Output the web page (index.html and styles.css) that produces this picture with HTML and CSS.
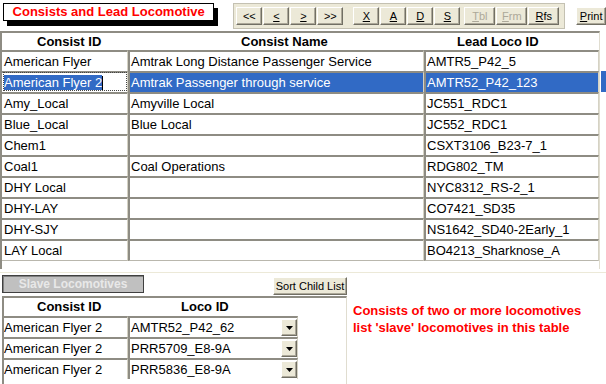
FILE: index.html
```html
<!DOCTYPE html>
<html lang="en">
<head>
  <meta charset="UTF-8">
  <title>Consists and Lead Locomotive</title>
  <link rel="stylesheet" href="styles.css">
</head>
<body>
  <!-- Title + record toolbar -->
  <div class="top-bar">
    <div class="form-title">Consists and Lead Locomotive</div>
    <div class="nav-panel">
      <button class="tb-btn">&lt;&lt;</button>
      <button class="tb-btn"><u>&lt;</u></button>
      <button class="tb-btn"><u>&gt;</u></button>
      <button class="tb-btn">&gt;&gt;</button>
      <button class="tb-btn edit-first"><u>X</u></button>
      <button class="tb-btn"><u>A</u></button>
      <button class="tb-btn"><u>D</u></button>
      <button class="tb-btn"><u>S</u></button>
      <button class="tb-btn wide tbl-gap" disabled><u>T</u>bl</button>
      <button class="tb-btn wide" disabled><u>F</u>rm</button>
      <button class="tb-btn wide"><u>R</u>fs</button>
    </div>
    <button class="tb-btn print-btn"><u>P</u>rint</button>
  </div>

  <!-- Consists grid -->
  <div class="main">
    <div class="grid">
      <div class="grid-head">
        <div class="h1">Consist ID</div>
        <div class="h2">Consist Name</div>
        <div class="h3">Lead Loco ID</div>
      </div>
      <div class="grid-row">
        <div class="cell">American Flyer</div>
        <div class="cell">Amtrak Long Distance Passenger Service</div>
        <div class="cell">AMTR5_P42_5</div>
      </div>
      <div class="grid-row selected">
        <div class="cell focus"><span class="sel-text">American Flyer 2</span><span class="caret"></span></div>
        <div class="cell">Amtrak Passenger through service</div>
        <div class="cell">AMTR52_P42_123</div>
      </div>
      <div class="grid-row">
        <div class="cell">Amy_Local</div>
        <div class="cell">Amyville Local</div>
        <div class="cell">JC551_RDC1</div>
      </div>
      <div class="grid-row">
        <div class="cell">Blue_Local</div>
        <div class="cell">Blue Local</div>
        <div class="cell">JC552_RDC1</div>
      </div>
      <div class="grid-row">
        <div class="cell">Chem1</div>
        <div class="cell"></div>
        <div class="cell">CSXT3106_B23-7_1</div>
      </div>
      <div class="grid-row">
        <div class="cell">Coal1</div>
        <div class="cell">Coal Operations</div>
        <div class="cell">RDG802_TM</div>
      </div>
      <div class="grid-row">
        <div class="cell">DHY Local</div>
        <div class="cell"></div>
        <div class="cell">NYC8312_RS-2_1</div>
      </div>
      <div class="grid-row">
        <div class="cell">DHY-LAY</div>
        <div class="cell"></div>
        <div class="cell">CO7421_SD35</div>
      </div>
      <div class="grid-row">
        <div class="cell">DHY-SJY</div>
        <div class="cell"></div>
        <div class="cell">NS1642_SD40-2Early_1</div>
      </div>
      <div class="grid-row">
        <div class="cell">LAY Local</div>
        <div class="cell"></div>
        <div class="cell">BO4213_Sharknose_A</div>
      </div>
    </div>
    <div class="row-marks">
      <div class="mark"></div>
      <div class="mark current"></div>
    </div>
  </div>

  <!-- Slave locomotives subform -->
  <div class="lower">
    <div class="lower-bar">
      <div class="slave-label">Slave Locomotives</div>
      <button class="tb-btn sort-btn">Sort Child List</button>
    </div>
    <div class="lower-body">
      <div class="sub">
        <div class="sub-head">
          <div class="h1">Consist ID</div>
          <div class="h2">Loco ID</div>
        </div>
        <div class="sub-row">
          <div class="cell">American Flyer 2</div>
          <div class="cell combo">AMTR52_P42_62<span class="combo-btn"><svg width="7" height="4" viewBox="0 0 7 4"><polygon points="0,0 7,0 3.5,4" fill="#000"/></svg></span></div>
        </div>
        <div class="sub-row">
          <div class="cell">American Flyer 2</div>
          <div class="cell combo">PRR5709_E8-9A<span class="combo-btn"><svg width="7" height="4" viewBox="0 0 7 4"><polygon points="0,0 7,0 3.5,4" fill="#000"/></svg></span></div>
        </div>
        <div class="sub-row">
          <div class="cell">American Flyer 2</div>
          <div class="cell combo">PRR5836_E8-9A<span class="combo-btn"><svg width="7" height="4" viewBox="0 0 7 4"><polygon points="0,0 7,0 3.5,4" fill="#000"/></svg></span></div>
        </div>
      </div>
      <div class="note">Consists of two or more locomotives list 'slave' locomotives in this table</div>
    </div>
  </div>
</body>
</html>
```

FILE: styles.css
```css
* {
  box-sizing: border-box;
}
html, body {
  margin: 0;
  padding: 0;
}
body {
  width: 606px;
  height: 384px;
  overflow: hidden;
  background: #fff;
  font-family: "Liberation Sans", Arial, sans-serif;
  font-size: 13px;
  color: #000;
}
/* Top bar */
.top-bar {
  display: flex;
  align-items: flex-start;
  height: 31px;
}
.form-title {
  margin: 3px 0 0 3px;
  width: 214px;
  height: 18px;
  line-height: 16px;
  border: 1px solid #000;
  background: #fff;
  box-shadow: 4px 5px 0 #000;
  color: #f00;
  font-weight: bold;
  font-size: 13px;
  text-align: center;
}
.nav-panel {
  display: flex;
  gap: 1px;
  margin: 3px 0 0 19px;
  height: 26px;
  padding: 3px 5px 0 2px;
  background: #ece9d8;
  border: 1px solid #c4c1b2;
}
.tb-btn {
  width: 26px;
  height: 18px;
  padding: 0;
  background: #ece9d8;
  border: 1px solid;
  border-color: #fff #716f64 #716f64 #fff;
  box-shadow: inset -1px -1px #aca899;
  font-family: inherit;
  font-size: 11px;
  line-height: 15px;
  color: #000;
}
.tb-btn.wide { width: 31px; }
.tb-btn:disabled { color: #aca899; }
.tb-btn.edit-first { margin-left: 9px; }
.tb-btn.tbl-gap { margin-left: 3px; }
.print-btn {
  margin: 7px 0 0 11px;
  width: 30px;
}
/* Consists grid */
.main {
  display: flex;
  align-items: flex-start;
}
.grid {
  width: 600px;
  border-top: 2px solid #8e8c83;
  border-left: 2px solid #8e8c83;
  border-right: 1px solid #e0ddd0;
  padding-bottom: 8px;
}
.grid-head, .grid-row {
  display: grid;
  grid-template-columns: 126px 296px 175px;
}
.grid-head {
  height: 17px;
  line-height: 17px;
  font-weight: bold;
}
.grid-head .h1 { padding-left: 35px; }
.grid-head .h2 { padding-left: 113px; }
.grid-head .h3 { padding-left: 33px; }
.grid-row {
  height: 21px;
}
.grid-row:last-child {
  height: 22px;
}
.cell {
  border-top: 2px solid #8e8c83;
  border-left: 2px solid #8e8c83;
  border-right: 1px solid #d5d2c4;
  padding-left: 1px;
  line-height: 19px;
  white-space: nowrap;
  overflow: hidden;
}
.grid-row .cell:first-child {
  border-left: none;
  padding-left: 2px;
}
.sub-row .cell:first-child {
  border-left: none;
  padding-left: 0;
}
.grid-row:last-child .cell {
  border-bottom: 1px solid #b9b7ad;
}
.grid-row.selected .cell {
  background: #316ac5;
  color: #fff;
}
.grid-row.selected .cell.focus {
  background: #fff;
  outline: 1px dotted #444;
  outline-offset: -2px;
}
.sel-text {
  background: #316ac5;
  color: #fff;
}
.caret {
  display: inline-block;
  width: 1px;
  height: 14px;
  background: #000;
  vertical-align: -3px;
}
.row-marks {
  width: 5px;
  margin-left: 1px;
  padding-top: 19px;
}
.mark { height: 21px; }
.mark.current { background: #316ac5; }
/* Lower part */
.lower {
  margin-top: 3px;
  border-top: 1px solid #ece9d8;
  padding-top: 2px;
}
.lower-bar {
  display: flex;
  align-items: flex-start;
  padding-left: 2px;
  height: 21px;
}
.slave-label {
  width: 142px;
  height: 18px;
  line-height: 16px;
  background: #c0c0c0;
  border: 1px solid #404040;
  box-shadow: inset 1px 1px #808080;
  color: #e8e8e8;
  font-weight: bold;
  font-size: 12px;
  text-align: center;
}
.sort-btn {
  margin: 2px 0 0 129px;
  width: 74px;
}
.lower-body {
  display: flex;
  align-items: flex-start;
}
.sub {
  margin-left: 2px;
  width: 345px;
  height: 100px;
  border-top: 2px solid #8e8c83;
  border-left: 2px solid #8e8c83;
  border-right: 1px solid #e0ddd0;
}
.sub-head, .sub-row {
  display: grid;
  grid-template-columns: 124px 170px;
}
.sub-head {
  height: 18px;
  line-height: 18px;
  font-weight: bold;
}
.sub-head .h1 { padding-left: 33px; }
.sub-head .h2 { padding-left: 53px; }
.sub-row {
  height: 21px;
}
.cell.combo {
  display: flex;
  align-items: center;
  justify-content: space-between;
}
.combo-btn {
  display: flex;
  align-items: center;
  justify-content: center;
  width: 16px;
  height: 17px;
  background: #ece9d8;
  border: 1px solid;
  border-color: #fff #716f64 #716f64 #fff;
  box-shadow: inset -1px -1px #aca899;
}
.note {
  margin-left: 6px;
  padding-top: 6px;
  width: 240px;
  color: #f00;
  font-weight: bold;
  font-size: 13px;
  line-height: 17px;
}
```
